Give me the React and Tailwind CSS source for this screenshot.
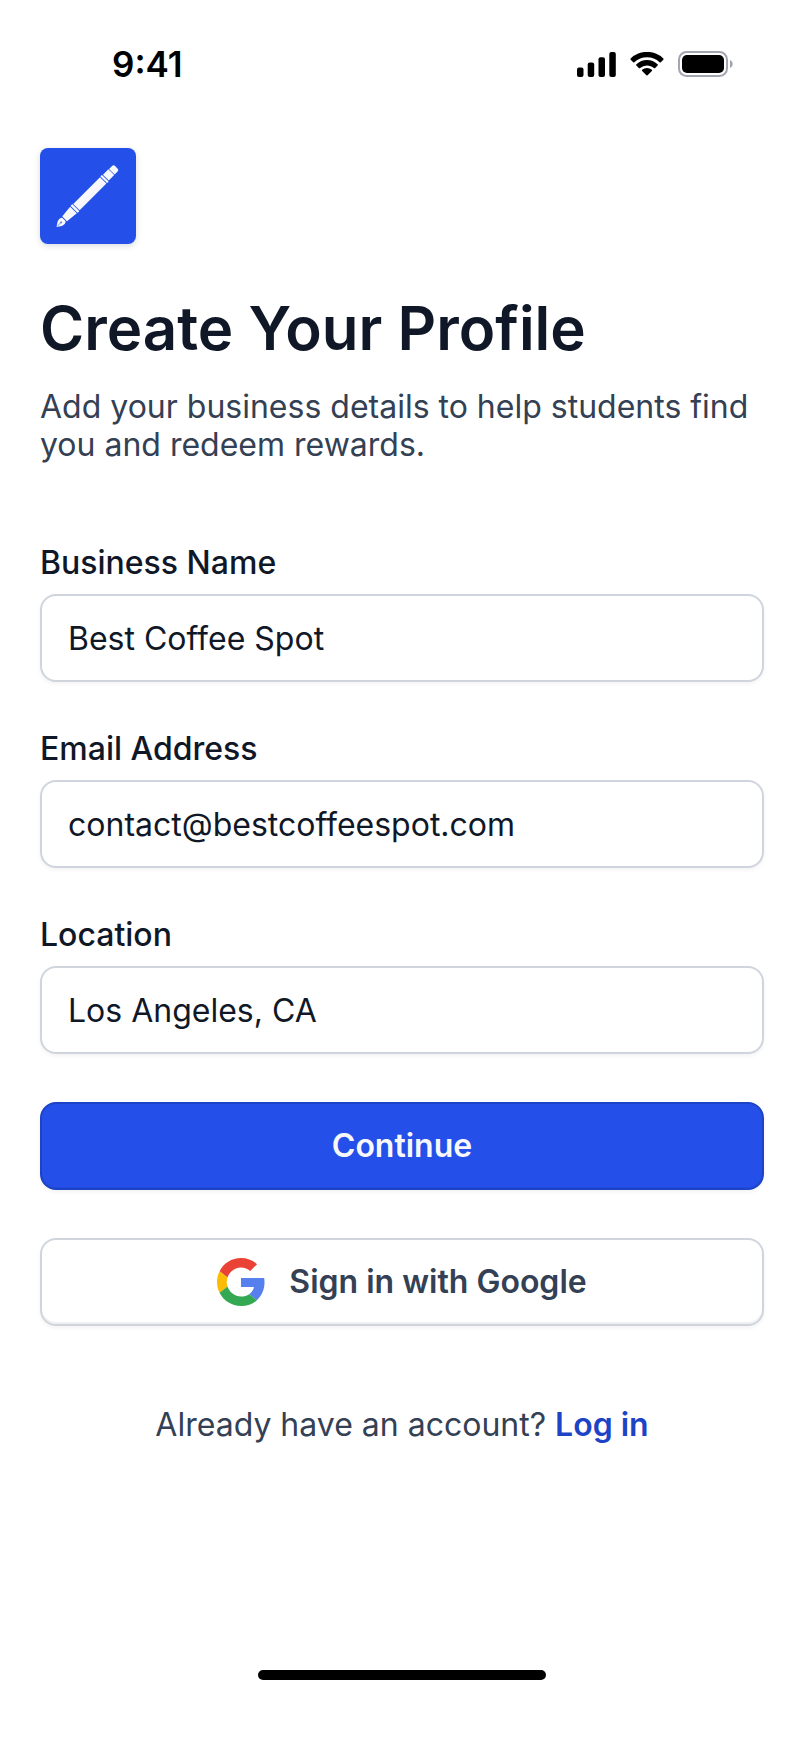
import React, { useState } from "react";

const fields = [
    { name: "business_name", label: "Business Name", type: "text" },
    { name: "email", label: "Email Address", type: "email" },
    { name: "location", label: "Location", type: "text" },
];

const StatusBar = () => (
    <div className="flex items-center justify-between pt-11 pl-28 pr-[71px]">
        <span className="text-[35px] leading-10 font-semibold text-black">9:41</span>
        <div className="flex items-center gap-[14px]">
            {/* Signal */}
            <svg width="39" height="25" viewBox="0 0 39 25" fill="black" aria-hidden="true">
                <rect x="0" y="15.5" width="6.5" height="9.5" rx="2" />
                <rect x="10.7" y="10.5" width="6.5" height="14.5" rx="2" />
                <rect x="21.5" y="5.3" width="6.5" height="19.7" rx="2" />
                <rect x="32.3" y="0" width="6.5" height="25" rx="2" />
            </svg>
            {/* Wifi */}
            <svg width="34" height="25" viewBox="0 0 34 25" fill="black" aria-hidden="true">
                <path d="M17 5.2c4.7 0 9.2 1.8 12.6 5a.9.9 0 0 0 1.2 0l2.5-2.5a.9.9 0 0 0 0-1.3 23.6 23.6 0 0 0-32.6 0 .9.9 0 0 0 0 1.3l2.5 2.5c.3.3.9.3 1.2 0a18.4 18.4 0 0 1 12.6-5z" />
                <path d="M17 13.4c2.6 0 5 1 6.9 2.7.4.3.9.3 1.3 0l2.4-2.5a.9.9 0 0 0 0-1.3 15.4 15.4 0 0 0-21.2 0 .9.9 0 0 0 0 1.3l2.4 2.5c.4.3.9.3 1.3 0A10.2 10.2 0 0 1 17 13.4z" />
                <path d="M21.9 19c.4-.4.4-1 0-1.3a7.6 7.6 0 0 0-9.8 0c-.4.3-.4.9 0 1.3l4.3 4.3c.3.4.9.4 1.2 0z" />
            </svg>
            {/* Battery */}
            <svg width="55" height="26" viewBox="0 0 55 26" aria-hidden="true">
                <rect x="1" y="1" width="48" height="24" rx="7.5" fill="none" stroke="#a3a6b0" strokeWidth="2" />
                <rect x="4" y="4" width="42" height="18" rx="5" fill="black" />
                <path d="M52 9v8c1.6-.7 2.7-2.2 2.7-4s-1.1-3.3-2.7-4z" fill="#a3a6b0" />
            </svg>
        </div>
    </div>
);

const Logo = () => (
    <div className="size-24 rounded-lg bg-[#2450e9] shadow-[0_2px_6px_rgba(16,24,40,0.15)]">
        <svg viewBox="0 0 96 96" className="size-full" aria-hidden="true">
            <g transform="translate(16.5 79) rotate(-45)" fill="#f8f8fc">
                <path d="M0 0 4.5-3C7-4 9-3.8 10.5-2.5v5C9 3.8 7 4 4.500 3z" />
                <path d="M11.5-3.2 13-3.6 24-4.7v9.4L13 3.6 11.5 3.2z" />
                <rect x="24.8" y="-5" width="2.6" height="10" rx=".6" />
                <path d="M28.2-4.5H66v9H28.2z" />
                <rect x="66.8" y="-4.8" width="2.2" height="9.6" rx=".5" />
                <path d="M69.8-4.100h7.700v8.200h-7.700z" />
                <path d="M78.200-3.900h4.300c1.200 0 2 .8 2 1.900v4c0 1.100-.8 1.900-2 1.900h-4.300z" />
                <path d="M1 0h5" stroke="#2450e9" strokeWidth=".6" />
                <circle cx="6.5" cy="0" r=".8" fill="#2450e9" />
            </g>
        </svg>
    </div>
);

const GoogleIcon = () => (
    <svg width="48" height="48" viewBox="0 0 48 48" aria-hidden="true">
        <path fill="#EA4335" d="M24 9.5c3.54 0 6.71 1.22 9.21 3.6l6.85-6.85C35.9 2.38 30.47 0 24 0 14.62 0 6.51 5.38 2.56 13.22l7.98 6.19C12.43 13.72 17.74 9.5 24 9.5z" />
        <path fill="#5580ee" d="M47.53 24.55c0-1.57-.15-3.09-.38-4.55H24v9.02h12.94c-.58 2.96-2.26 5.48-4.78 7.18l7.73 6c4.51-4.18 7.64-10.36 7.64-17.65z" />
        <path fill="#FBBC05" d="M10.53 28.59c-.48-1.45-.76-2.99-.76-4.59s.27-3.14.76-4.59l-7.98-6.19C.92 16.46 0 20.12 0 24s.92 7.54 2.56 10.78z" />
        <path fill="#34A853" d="M24 48c6.48 0 11.93-2.13 15.89-5.81l-7.73-6c-2.15 1.45-4.92 2.3-8.16 2.3-6.26 0-11.57-4.22-13.47-9.91l-7.98 6.19C6.51 42.62 14.62 48 24 48z" />
    </svg>
);

export default function App() {
    const [formData, setFormData] = useState({
        business_name: "Best Coffee Spot",
        email: "contact@bestcoffeespot.com",
        location: "Los Angeles, CA",
    });

    const handleChange = (e) => {
        setFormData({ ...formData, [e.target.name]: e.target.value });
    };

    const handleSubmit = (e) => {
        e.preventDefault();
    };

    return (
        <div className="min-h-screen flex flex-col bg-white font-['Inter',sans-serif] text-[32px] leading-[38px] text-[#344054]">
            <StatusBar />

            <main className="flex flex-col px-10 pt-16">
                <Logo />

                <h1 className="mt-12 text-[60px] leading-[72px] font-semibold text-[#101828]">
                    Create Your Profile
                </h1>
                <p className="mt-6">
                    Add your business details to help students find you and redeem rewards.
                </p>

                <form onSubmit={handleSubmit} className="mt-20 flex flex-col gap-12">
                    {fields.map((field) => (
                        <div key={field.name} className="flex flex-col gap-3">
                            <label htmlFor={field.name} className="font-medium text-[#101828]">
                                {field.label}
                            </label>
                            <input
                                id={field.name}
                                type={field.type}
                                name={field.name}
                                value={formData[field.name]}
                                onChange={handleChange}
                                className="h-22 w-full rounded-2xl border-2 border-[#d0d5dd] bg-white px-[26px] text-[#101828] outline-none shadow-[0_2px_4px_rgba(16,24,40,0.05)]"
                            />
                        </div>
                    ))}

                    <button
                        type="submit"
                        className="h-22 rounded-2xl border-2 border-[#1d43c6] bg-[#2450e9] font-semibold text-[#f8f8fc] shadow-[0_2px_4px_rgba(16,24,40,0.05),inset_0_-1px_0_#224bdb]"
                    >
                        Continue
                    </button>

                    <button
                        type="button"
                        className="flex h-22 items-center justify-center gap-6 rounded-2xl border-2 border-[#d0d5dd] bg-white font-semibold shadow-[0_2px_4px_rgba(16,24,40,0.05),inset_0_-2px_0_#eff0f3]"
                    >
                        <GoogleIcon />
                        Sign in with Google
                    </button>
                </form>

                <p className="mt-20 text-center">
                    Already have an account?{" "}
                    <a href="#login" className="font-semibold text-[#1d43c6]">
                        Log in
                    </a>
                </p>
            </main>

            {/* Home indicator */}
            <div className="mt-auto flex justify-center pt-12 pb-17">
                <div className="h-[10px] w-72 rounded-full bg-black"></div>
            </div>
        </div>
    );
}
